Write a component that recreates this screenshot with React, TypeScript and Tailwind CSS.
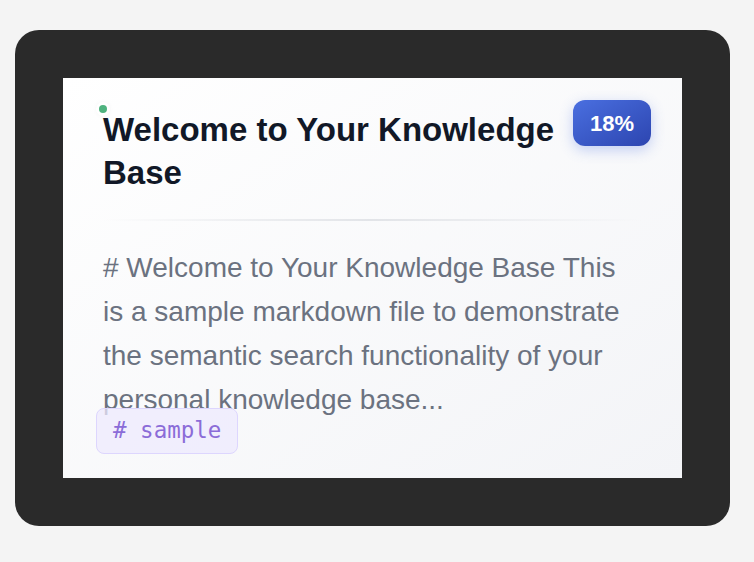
import React from "react";

export default function App() {
  return (
    <div className="min-h-screen w-full bg-[#f4f4f4] pt-[30px] pl-[15px]" style={{ fontFamily: '"Liberation Sans", Arial, sans-serif' }}>
      <div className="w-[715px] h-[496px] rounded-[24px] bg-[#2a2a2a] p-[48px]">
        <div className="relative h-[400px] w-[619px] bg-gradient-to-br from-[#ffffff] to-[#f3f4f7] px-[40px] pt-[30px]">
          <div className="absolute left-[36px] top-[27px] h-[8px] w-[8px] rounded-full bg-[#4fb37f] ring-[3px] ring-white shadow-[0_0_6px_rgba(0,0,0,0.15)]" />
          <div className="flex items-start justify-between">
            <h1 className="w-[470px] text-[33px] font-bold leading-[43px] text-[#111827]">
              Welcome to Your Knowledge Base
            </h1>
            <div className="mt-[-8px] mr-[-9px] flex h-[46px] w-[78px] items-center justify-center rounded-[12px] bg-gradient-to-br from-[#4a6fe0] to-[#2d45b0] text-[22px] font-bold text-white shadow-[0_4px_14px_rgba(65,105,225,0.3)]">
              18%
            </div>
          </div>
          <div className="mt-[25px] h-[2px] w-full bg-gradient-to-r from-transparent via-[#e2e4e8] to-transparent" />
          <p className="mt-[25px] h-[162px] w-full text-[28px] leading-[44px] text-[#6b7280]">
            # Welcome to Your Knowledge Base This is a sample markdown file to demonstrate the semantic search functionality of your personal knowledge base...
          </p>
          <div className="relative ml-[-7px] inline-flex h-[46px] items-center rounded-[8px] border border-[#ddd6fe] bg-[#ede9fe]/75 px-[16px] text-[22.5px] font-medium text-[#8b6cd8]" style={{ fontFamily: '"DejaVu Sans Mono", monospace' }}>
            # sample
          </div>
        </div>
      </div>
    </div>
  );
}
